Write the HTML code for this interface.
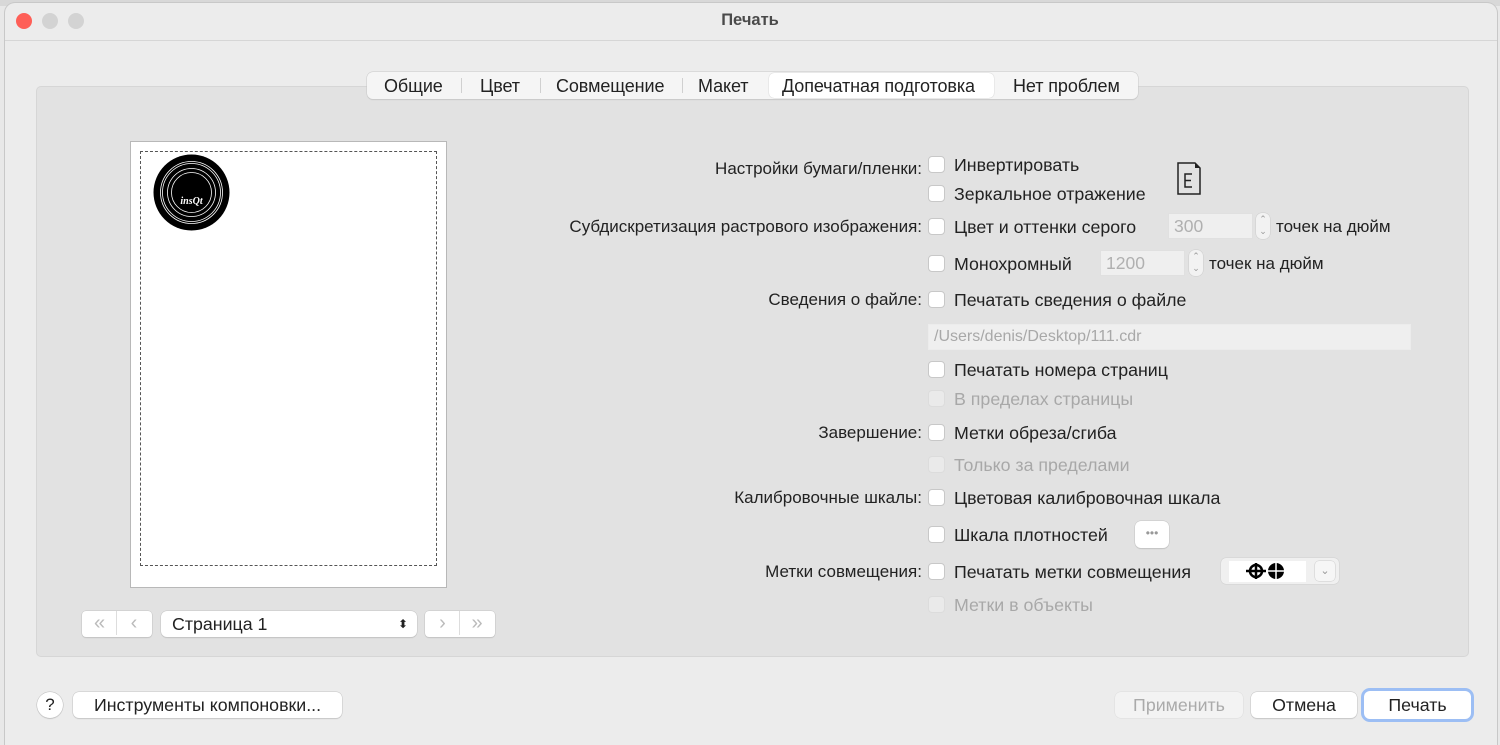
<!DOCTYPE html>
<html><head><meta charset="utf-8"><style>
*{margin:0;padding:0;box-sizing:border-box}
body{width:1500px;height:745px;overflow:hidden;background:#e8e8e8;font-family:"Liberation Sans",sans-serif;color:#222;position:relative}
.a{position:absolute;white-space:nowrap}
.t{font-size:17.8px;line-height:20px}
.lbl{font-size:17px;line-height:20px;text-align:right;right:578px}
.cb{position:absolute;left:928px;width:17px;height:17px;background:#fff;border:1px solid #c8c8c8;border-radius:4px}
.cb.d{background:#eaeaea;border-color:#dcdcdc}
.dis{color:#a8a8a8}
.btn{position:absolute;background:#fff;border-radius:6px;box-shadow:0 0 0 .5px #c4c4c4,0 1px 1px rgba(0,0,0,.15);font-size:17.8px;text-align:center;line-height:26px}
.num{position:absolute;background:#efefef;border:1px solid #e0e0e0;color:#b0b0b0;font-size:17.5px;line-height:24px;padding-left:5px}
.st{position:absolute;width:14px;height:26px;background:#f2f2f2;border-radius:6px;box-shadow:0 0 0 .5px #ccc;font-size:9px;color:#999;text-align:center;line-height:12px}
.tab{font-size:18px;letter-spacing:-.1px}
</style></head><body>
<div class="a" style="left:0;top:0;width:1500px;height:6px;background:#d8d8d8"></div>
<div class="a" style="left:5px;top:3px;width:1492px;height:742px;background:#ececec;border-radius:10px 10px 0 0;box-shadow:0 0 0 1px #c8c8c8"></div>
<div class="a" style="left:5px;top:40px;width:1492px;height:1px;background:#d6d6d6"></div>
<div class="a" style="left:16px;top:13px;width:16px;height:16px;border-radius:50%;background:#fe5f57"></div>
<div class="a" style="left:42px;top:13px;width:16px;height:16px;border-radius:50%;background:#d3d3d3"></div>
<div class="a" style="left:68px;top:13px;width:16px;height:16px;border-radius:50%;background:#d3d3d3"></div>
<div class="a" style="left:0;width:1500px;top:11px;text-align:center;font-size:16.5px;font-weight:bold;color:#4a4a4a">Печать</div>

<div class="a" style="left:36px;top:86px;width:1433px;height:571px;background:#e2e2e2;border:1px solid #d6d6d6;border-radius:5px"></div>
<div class="a" style="left:367px;top:72px;width:771px;height:27px;background:#f5f5f5;border-radius:6px;box-shadow:0 0 0 .5px #c8c8c8,0 1px 1px rgba(0,0,0,.12)"></div>
<div class="a" style="left:769px;top:73px;width:225px;height:25px;background:#fff;border-radius:5px;box-shadow:0 0 1px rgba(0,0,0,.3)"></div>
<div class="a" style="left:461px;top:78px;width:1px;height:15px;background:#d0d0d0"></div>
<div class="a" style="left:540px;top:78px;width:1px;height:15px;background:#d0d0d0"></div>
<div class="a" style="left:682px;top:78px;width:1px;height:15px;background:#d0d0d0"></div>
<div class="a t tab" style="left:384px;top:76px">Общие</div>
<div class="a t tab" style="left:480px;top:76px">Цвет</div>
<div class="a t tab" style="left:556px;top:76px">Совмещение</div>
<div class="a t tab" style="left:698px;top:76px">Макет</div>
<div class="a t tab" style="left:782px;top:76px">Допечатная подготовка</div>
<div class="a t tab" style="left:1013px;top:76px">Нет проблем</div>

<div class="a" style="left:130px;top:141px;width:317px;height:447px;background:#fff;border:1px solid #b8b8b8"></div>
<div class="a" style="left:140px;top:151px;width:297px;height:415px;border:1px dashed #555"></div>
<svg class="a" style="left:153px;top:154px" width="77" height="77" viewBox="0 0 77 77"><circle cx="38.5" cy="38.5" r="38" fill="#000"/><circle cx="38.5" cy="38.5" r="31" fill="none" stroke="#fff" stroke-width=".8"/><circle cx="38.5" cy="38.5" r="29" fill="none" stroke="#fff" stroke-width=".8"/><circle cx="38.5" cy="38.5" r="24" fill="none" stroke="#fff" stroke-width=".8"/><circle cx="38.5" cy="38.5" r="20" fill="none" stroke="#fff" stroke-width=".8"/><text x="38.5" y="50" fill="#fff" font-size="10" font-weight="bold" font-style="italic" text-anchor="middle" font-family="Liberation Serif">insQt</text></svg>

<div class="btn" style="left:82px;top:611px;width:70px;height:26px;color:#bbb;font-size:20px;line-height:24px;border-radius:4px"><span style="display:inline-block;width:34px;border-right:1px solid #ddd">«</span><span style="display:inline-block;width:34px">‹</span></div>
<div class="btn" style="left:161px;top:611px;width:256px;height:26px;text-align:left;padding-left:11px">Страница 1<span style="position:absolute;right:9px;top:0;font-size:12px">⬍</span></div>
<div class="btn" style="left:425px;top:611px;width:70px;height:26px;color:#bbb;font-size:20px;line-height:24px;border-radius:4px"><span style="display:inline-block;width:34px;border-right:1px solid #ddd">›</span><span style="display:inline-block;width:34px">»</span></div>

<div class="a lbl" style="top:159px">Настройки бумаги/пленки:</div>
<div class="cb" style="top:156px"></div><div class="a t" style="left:954px;top:155px">Инвертировать</div>
<div class="cb" style="top:185px"></div><div class="a t" style="left:954px;top:184px">Зеркальное отражение</div>
<svg class="a" style="left:1176px;top:162px" width="26" height="34"><path d="M2 1H19L24 6V32H2Z" fill="none" stroke="#222" stroke-width="1.5"/><path d="M19 1V6H24" fill="#222"/><path d="M16 12H9V25H16M9 18.5H15" fill="none" stroke="#222" stroke-width="1.5"/></svg>
<div class="a lbl" style="top:217px">Субдискретизация растрового изображения:</div>
<div class="cb" style="top:218px"></div><div class="a t" style="left:954px;top:217px">Цвет и оттенки серого</div>
<div class="num" style="left:1168px;top:213px;width:85px;height:26px">300</div>
<div class="st" style="left:1256px;top:213px">⌃<br>⌄</div>
<div class="a t" style="left:1276px;top:217px;font-size:17px">точек на дюйм</div>
<div class="cb" style="top:255px"></div><div class="a t" style="left:954px;top:254px">Монохромный</div>
<div class="num" style="left:1100px;top:250px;width:85px;height:26px">1200</div>
<div class="st" style="left:1189px;top:250px">⌃<br>⌄</div>
<div class="a t" style="left:1209px;top:254px;font-size:17px">точек на дюйм</div>
<div class="a lbl" style="top:290px">Сведения о файле:</div>
<div class="cb" style="top:291px"></div><div class="a t" style="left:954px;top:290px">Печатать сведения о файле</div>
<div class="num" style="left:928px;top:324px;width:483px;height:26px;font-size:16px;color:#a8a8a8;border-color:#ececec">/Users/denis/Desktop/111.cdr</div>
<div class="cb" style="top:361px"></div><div class="a t" style="left:954px;top:360px">Печатать номера страниц</div>
<div class="cb d" style="top:390px"></div><div class="a t dis" style="left:954px;top:389px">В пределах страницы</div>
<div class="a lbl" style="top:423px">Завершение:</div>
<div class="cb" style="top:424px"></div><div class="a t" style="left:954px;top:423px">Метки обреза/сгиба</div>
<div class="cb d" style="top:456px"></div><div class="a t dis" style="left:954px;top:455px">Только за пределами</div>
<div class="a lbl" style="top:488px">Калибровочные шкалы:</div>
<div class="cb" style="top:489px"></div><div class="a t" style="left:954px;top:488px">Цветовая калибровочная шкала</div>
<div class="cb" style="top:526px"></div><div class="a t" style="left:954px;top:525px">Шкала плотностей</div>
<div class="btn" style="left:1135px;top:521px;width:34px;height:27px;color:#999;font-size:12px;line-height:24px">•••</div>
<div class="a lbl" style="top:562px">Метки совмещения:</div>
<div class="cb" style="top:563px"></div><div class="a t" style="left:954px;top:562px">Печатать метки совмещения</div>
<div class="a" style="left:1221px;top:558px;width:118px;height:26px;background:#f0f0f0;border-radius:5px;box-shadow:0 0 0 .5px #d0d0d0"></div>
<div class="a" style="left:1229px;top:561px;width:77px;height:21px;background:#fff"></div>
<svg class="a" style="left:1245px;top:562px" width="44" height="18"><circle cx="11" cy="9" r="6" fill="none" stroke="#000" stroke-width="2.5"/><path d="M1 9H21M11 1V17" stroke="#000" stroke-width="2.5"/><circle cx="31" cy="9" r="8" fill="#000"/><path d="M22 9H40M31 1V17" stroke="#fff" stroke-width="1.5"/></svg>
<div class="a" style="left:1315px;top:561px;width:20px;height:20px;background:#f6f6f6;border-radius:4px;box-shadow:0 0 0 .5px #ccc;color:#999;font-size:11px;text-align:center;line-height:20px">⌄</div>
<div class="cb d" style="top:596px"></div><div class="a t dis" style="left:954px;top:595px">Метки в объекты</div>

<div class="a" style="left:37px;top:692px;width:26px;height:26px;border-radius:50%;background:#fff;box-shadow:0 0 0 .5px #bbb,0 1px 1px rgba(0,0,0,.15);text-align:center;font-size:17px;line-height:26px">?</div>
<div class="btn" style="left:73px;top:692px;width:269px;height:26px">Инструменты компоновки...</div>
<div class="btn" style="left:1115px;top:692px;width:128px;height:26px;background:#f3f3f3;color:#aaa;box-shadow:0 0 0 .5px #ddd">Применить</div>
<div class="btn" style="left:1251px;top:692px;width:106px;height:26px">Отмена</div>
<div class="btn" style="left:1364px;top:691px;width:107px;height:28px;box-shadow:0 0 0 3px #9cbef4,0 0 0 1px #6f9ee8;line-height:28px">Печать</div>
</body></html>
